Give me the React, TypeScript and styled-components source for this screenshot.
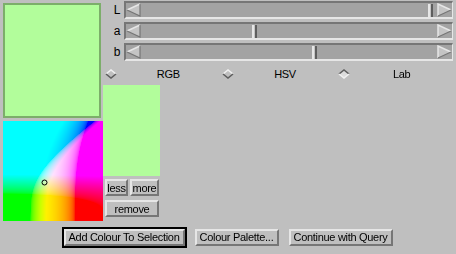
import React, { useEffect, useRef } from 'react';
import styled, { createGlobalStyle } from 'styled-components';

const BG = '#bfbfbf';
const LIGHT = '#e6e6e6';
const DARK = '#767676';
const TROUGH = '#a3a3a3';
const SWATCH = '#b2fd9b';
const SWATCH_EDGE = '#7cae6a';

const GlobalStyle = createGlobalStyle`
  html, body {
    margin: 0;
    padding: 0;
    background: ${BG};
  }

  body {
    font-family: 'Liberation Sans', Arial, sans-serif;
    font-size: 11px;
    letter-spacing: -0.3px;
    color: #000;
  }
`;

// lab -> sRGB, clipped per channel
const labToRgb = (L: number, a: number, b: number): [number, number, number] => {
  const fy = (L + 16) / 116;
  const fx = fy + a / 500;
  const fz = fy - b / 200;
  const inv = (t: number) => (t > 6 / 29 ? t * t * t : 3 * (6 / 29) * (6 / 29) * (t - 4 / 29));
  const X = 0.95047 * inv(fx);
  const Y = inv(fy);
  const Z = 1.08883 * inv(fz);
  const lin = [
    3.2406 * X - 1.5372 * Y - 0.4986 * Z,
    -0.9689 * X + 1.8758 * Y + 0.0415 * Z,
    0.0557 * X - 0.204 * Y + 1.057 * Z
  ];
  const out = lin.map((c) => {
    const v = Math.min(1, Math.max(0, c));
    const s = v <= 0.0031308 ? 12.92 * v : 1.055 * Math.pow(v, 1 / 2.4) - 0.055;
    return Math.round(s * 255);
  });

  return [out[0], out[1], out[2]];
};

const Window = styled.div`
  width: 456px;
  height: 254px;
  box-sizing: border-box;
  background: ${BG};
  display: flex;
  flex-direction: column;
  padding: 1px 3px 0 3px;
  overflow: hidden;
`;

const Main = styled.div`
  display: flex;
  height: 220px;
`;

const LeftColumn = styled.div`
  width: 100px;
  display: flex;
  flex-direction: column;
  gap: 3px;
  padding-top: 2px;
`;

const BigSwatch = styled.div`
  width: 98px;
  height: 115px;
  box-sizing: border-box;
  background: ${SWATCH};
  border: 2px solid ${SWATCH_EDGE};
`;

const PlaneBox = styled.div`
  width: 100px;
  height: 100px;
`;

const PlaneCanvas = styled.canvas`
  display: block;
  width: 100px;
  height: 100px;
`;

const RightColumn = styled.div`
  flex: 1;
  display: flex;
  flex-direction: column;
`;

const SliderStack = styled.div`
  display: flex;
  flex-direction: column;
  gap: 3px;
`;

const SliderRow = styled.div`
  display: flex;
  align-items: center;
  height: 18px;
`;

const SliderLabel = styled.span`
  width: 21px;
  box-sizing: border-box;
  padding-right: 4px;
  text-align: right;
  font-size: 12px;
`;

const Trough = styled.div`
  flex: 1;
  height: 18px;
  box-sizing: border-box;
  display: flex;
  align-items: center;
  background: ${TROUGH};
  border-style: solid;
  border-width: 2px 1px 2px 2px;
  border-color: ${DARK} ${LIGHT} ${LIGHT} ${DARK};
`;

const Track = styled.div`
  position: relative;
  flex: 1;
  align-self: stretch;
`;

const Thumb = styled.div`
  position: absolute;
  top: 1px;
  bottom: 0;
  width: 5px;
  box-sizing: border-box;
  background: #c4c4c4;
  border-left: 2px solid ${LIGHT};
  border-right: 2px solid #5e5e5e;
`;

const RadioRow = styled.div`
  display: flex;
  height: 23px;
  align-items: center;
  padding-top: 1px;
`;

const RadioItem = styled.label`
  flex: 1;
  display: flex;
  align-items: center;
  padding-left: 2px;
`;

const RadioText = styled.span`
  flex: 1;
  text-align: center;
`;

const Lower = styled.div`
  display: flex;
  flex-direction: column;
  width: 57px;
`;

const SmallSwatch = styled.div`
  height: 91px;
  background: ${SWATCH};
`;

const SmallButtons = styled.div`
  display: grid;
  grid-template-columns: 23px 29px;
  column-gap: 2px;
  row-gap: 4px;
  padding: 3px 0 0 2px;
`;

const Bevel = styled.button<{ $wide?: boolean }>`
  font: inherit;
  letter-spacing: inherit;
  color: #000;
  height: 17px;
  padding: 0;
  margin: 0;
  box-sizing: border-box;
  background: ${BG};
  border-style: solid;
  border-width: 2px;
  border-color: ${LIGHT} ${DARK} ${DARK} ${LIGHT};
  text-align: center;
  white-space: nowrap;
  grid-column: ${(p) => (p.$wide ? '1 / span 2' : 'auto')};
`;

const BottomBar = styled.div`
  flex: 1;
  display: flex;
  align-items: center;
  justify-content: center;
  gap: 6px;
  padding-bottom: 1px;
`;

const Ring = styled.div<{ $default?: boolean }>`
  border: 2px solid ${(p) => (p.$default ? '#000' : 'transparent')};
  display: flex;
`;

const PushButton = styled(Bevel)<{ $w: number }>`
  width: ${(p) => p.$w}px;
`;

const Arrow: React.FC<{ dir: 'left' | 'right' }> = ({ dir }) => (
  <svg width='15' height='14' viewBox='0 0 15 14' style={{ display: 'block', flex: 'none' }}>
    {dir === 'left'
      ? (
        <>
          <polygon points='1,7 14,1 14,13' fill='#c4c4c4' />
          <polyline points='1,7 14,1' stroke={LIGHT} strokeWidth='1.5' fill='none' />
          <polyline points='1,7 14,13 14,1' stroke={DARK} strokeWidth='1.2' fill='none' />
        </>
      )
      : (
        <>
          <polygon points='14,7 1,1 1,13' fill='#c4c4c4' />
          <polyline points='1,13 1,1 14,7' stroke={LIGHT} strokeWidth='1.5' fill='none' />
          <polyline points='1,13 14,7' stroke={DARK} strokeWidth='1.2' fill='none' />
        </>
      )}
  </svg>
);

const Diamond: React.FC<{ on?: boolean }> = ({ on }) => (
  <svg width='12' height='10' viewBox='0 0 12 10' style={{ display: 'block' }}>
    <polygon points='6,1 11,5 6,9 1,5' fill={on ? '#dcdcdc' : BG} />
    <polyline points='1,5 6,1 11,5' stroke={on ? '#5e5e5e' : '#f0f0f0'} strokeWidth='1.6' fill='none' />
    <polyline points='1,5 6,9 11,5' stroke={on ? '#f0f0f0' : '#5e5e5e'} strokeWidth='1.6' fill='none' />
  </svg>
);

const Slider: React.FC<{ label: string; value: number }> = ({ label, value }) => (
  <SliderRow>
    <SliderLabel>{label}</SliderLabel>
    <Trough>
      <Arrow dir='left' />
      <Track>
        <Thumb style={{ left: `calc(${value * 100}% - ${value * 5}px)` }} />
      </Track>
      <Arrow dir='right' />
    </Trough>
  </SliderRow>
);

// a/b plane at fixed lightness; neutral point sits at (cx, cy), `scale` lab units per pixel
const PLANE = { lightness: 93, scale: 5, cx: 47, cy: 56 };

const ColourPlane: React.FC<{ marker: [number, number] }> = ({ marker }) => {
  const ref = useRef<HTMLCanvasElement>(null);

  useEffect(() => {
    const canvas = ref.current;
    if (!canvas) return;
    const ctx = canvas.getContext('2d');
    if (!ctx) return;
    const img = ctx.createImageData(100, 100);
    for (let y = 0; y < 100; y++) {
      for (let x = 0; x < 100; x++) {
        const a = (x + 0.5 - PLANE.cx) * PLANE.scale;
        const b = (y + 0.5 - PLANE.cy) * PLANE.scale;
        const [r, g, bl] = labToRgb(PLANE.lightness, a, b);
        const i = (y * 100 + x) * 4;
        img.data[i] = r;
        img.data[i + 1] = g;
        img.data[i + 2] = bl;
        img.data[i + 3] = 255;
      }
    }
    ctx.putImageData(img, 0, 0);
    ctx.beginPath();
    ctx.arc(marker[0] + 0.5, marker[1] + 0.5, 2.5, 0, Math.PI * 2);
    ctx.strokeStyle = '#000';
    ctx.lineWidth = 1;
    ctx.stroke();
  }, [marker]);

  return <PlaneCanvas ref={ref} width={100} height={100} />;
};

const marker: [number, number] = [41, 61];

export default function App () {
  return (
    <Window>
      <GlobalStyle />
      <Main>
        <LeftColumn>
          <BigSwatch />
          <PlaneBox>
            <ColourPlane marker={marker} />
          </PlaneBox>
        </LeftColumn>
        <RightColumn>
          <SliderStack>
            <Slider label='L' value={0.985} />
            <Slider label='a' value={0.383} />
            <Slider label='b' value={0.586} />
          </SliderStack>
          <RadioRow>
            <RadioItem><Diamond /><RadioText>RGB</RadioText></RadioItem>
            <RadioItem><Diamond /><RadioText>HSV</RadioText></RadioItem>
            <RadioItem><Diamond on /><RadioText>Lab</RadioText></RadioItem>
          </RadioRow>
          <Lower>
            <SmallSwatch />
            <SmallButtons>
              <Bevel>less</Bevel>
              <Bevel>more</Bevel>
              <Bevel $wide>remove</Bevel>
            </SmallButtons>
          </Lower>
        </RightColumn>
      </Main>
      <BottomBar>
        <Ring $default><PushButton $w={121}>Add Colour To Selection</PushButton></Ring>
        <Ring><PushButton $w={84}>Colour Palette...</PushButton></Ring>
        <Ring><PushButton $w={104}>Continue with Query</PushButton></Ring>
      </BottomBar>
    </Window>
  );
}
